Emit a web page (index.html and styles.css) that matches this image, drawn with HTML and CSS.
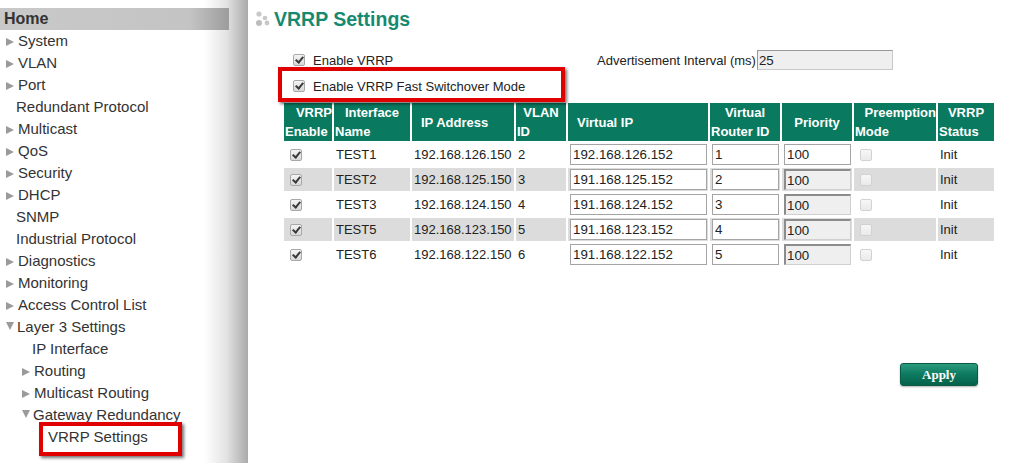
FILE: index.html
```html
<!DOCTYPE html>
<html lang="en">

<head>
    <meta name="viewport" content="width=device-width, initial-scale=1.0">
    <link rel="stylesheet" href="styles.css">
</head>

<body>
    <div class="page">
        <div class="sidebar">
            <div class="home">Home</div>
            <div class="nav-item"><span class="arrow"></span>System</div>
            <div class="nav-item"><span class="arrow"></span>VLAN</div>
            <div class="nav-item"><span class="arrow"></span>Port</div>
            <div class="nav-item plain">Redundant Protocol</div>
            <div class="nav-item"><span class="arrow"></span>Multicast</div>
            <div class="nav-item"><span class="arrow"></span>QoS</div>
            <div class="nav-item"><span class="arrow"></span>Security</div>
            <div class="nav-item"><span class="arrow"></span>DHCP</div>
            <div class="nav-item plain">SNMP</div>
            <div class="nav-item plain">Industrial Protocol</div>
            <div class="nav-item"><span class="arrow"></span>Diagnostics</div>
            <div class="nav-item"><span class="arrow"></span>Monitoring</div>
            <div class="nav-item"><span class="arrow"></span>Access Control List</div>
            <div class="nav-item"><span class="arrow open"></span>Layer 3 Settings</div>
            <div class="nav-item sub plain">IP Interface</div>
            <div class="nav-item sub"><span class="arrow"></span>Routing</div>
            <div class="nav-item sub"><span class="arrow"></span>Multicast Routing</div>
            <div class="nav-item sub"><span class="arrow open"></span>Gateway Redundancy</div>
            <div class="nav-item subsub plain">VRRP Settings<span class="highlight nav-mark"></span></div>
        </div>

        <div class="main">
            <h1 class="title">
                <svg class="dots" width="16" height="18" viewBox="0 0 16 18">
                    <circle cx="3" cy="4" r="2.6" fill="#c8c8c8" />
                    <circle cx="9" cy="8" r="2.3" fill="#c8c8c8" />
                    <circle cx="3" cy="13" r="3" fill="#bdbdbd" />
                    <circle cx="11" cy="13" r="2.4" fill="#c8c8c8" />
                </svg>
                VRRP Settings
            </h1>

            <div class="options">
                <div class="option-row">
                    <label class="check-label"><input type="checkbox" class="box" checked> Enable VRRP</label>
                    <label class="interval">Advertisement Interval (ms)<input type="text" class="interval-input" value="25"></label>
                </div>
                <div class="option-row">
                    <label class="check-label"><input type="checkbox" class="box" checked> Enable VRRP Fast Switchover Mode</label>
                    <span class="highlight option-mark"></span>
                </div>
            </div>

            <table class="vrrp-table">
                <thead>
                    <tr>
                        <th class="c-enable"><span class="l1 right">VRRP</span><span class="l2">Enable</span></th>
                        <th class="c-name"><span class="l1">Interface</span><span class="l2">Name</span></th>
                        <th class="c-ip single">IP Address</th>
                        <th class="c-vlan"><span class="l1">VLAN</span><span class="l2">ID</span></th>
                        <th class="c-vip single">Virtual IP</th>
                        <th class="c-vrid"><span class="l1">Virtual</span><span class="l2">Router ID</span></th>
                        <th class="c-prio single center">Priority</th>
                        <th class="c-pre"><span class="l1 right">Preemption</span><span class="l2">Mode</span></th>
                        <th class="c-status"><span class="l1">VRRP</span><span class="l2">Status</span></th>
                    </tr>
                </thead>
                <tbody>
                    <tr>
                        <td><input type="checkbox" class="box" checked></td>
                        <td>TEST1</td>
                        <td>192.168.126.150</td>
                        <td>2</td>
                        <td class="field"><input type="text" class="cell-input vip" value="192.168.126.152"></td>
                        <td class="field"><input type="text" class="cell-input vrid" value="1"></td>
                        <td class="field"><input type="text" class="cell-input prio" value="100"></td>
                        <td><input type="checkbox" class="box" disabled></td>
                        <td>Init</td>
                    </tr>
                    <tr>
                        <td><input type="checkbox" class="box" checked></td>
                        <td>TEST2</td>
                        <td>192.168.125.150</td>
                        <td>3</td>
                        <td class="field"><input type="text" class="cell-input vip" value="191.168.125.152"></td>
                        <td class="field"><input type="text" class="cell-input vrid" value="2"></td>
                        <td class="field"><input type="text" class="cell-input prio locked" value="100" readonly></td>
                        <td><input type="checkbox" class="box" disabled></td>
                        <td>Init</td>
                    </tr>
                    <tr>
                        <td><input type="checkbox" class="box" checked></td>
                        <td>TEST3</td>
                        <td>192.168.124.150</td>
                        <td>4</td>
                        <td class="field"><input type="text" class="cell-input vip" value="191.168.124.152"></td>
                        <td class="field"><input type="text" class="cell-input vrid" value="3"></td>
                        <td class="field"><input type="text" class="cell-input prio locked" value="100" readonly></td>
                        <td><input type="checkbox" class="box" disabled></td>
                        <td>Init</td>
                    </tr>
                    <tr>
                        <td><input type="checkbox" class="box" checked></td>
                        <td>TEST5</td>
                        <td>192.168.123.150</td>
                        <td>5</td>
                        <td class="field"><input type="text" class="cell-input vip" value="191.168.123.152"></td>
                        <td class="field"><input type="text" class="cell-input vrid" value="4"></td>
                        <td class="field"><input type="text" class="cell-input prio locked" value="100" readonly></td>
                        <td><input type="checkbox" class="box" disabled></td>
                        <td>Init</td>
                    </tr>
                    <tr>
                        <td><input type="checkbox" class="box" checked></td>
                        <td>TEST6</td>
                        <td>192.168.122.150</td>
                        <td>6</td>
                        <td class="field"><input type="text" class="cell-input vip" value="191.168.122.152"></td>
                        <td class="field"><input type="text" class="cell-input vrid" value="5"></td>
                        <td class="field"><input type="text" class="cell-input prio locked" value="100" readonly></td>
                        <td><input type="checkbox" class="box" disabled></td>
                        <td>Init</td>
                    </tr>
                </tbody>
            </table>

            <div class="actions">
                <button class="apply">Apply</button>
            </div>
        </div>
    </div>
</body>

</html>
```

FILE: styles.css
```css
body {
    margin: 0;
    font-family: "Liberation Sans", Arial, sans-serif;
    color: #222;
    background: #fff;
}

.page {
    display: flex;
    height: 463px;
}

/* left menu */
.sidebar {
    width: 248px;
    flex-shrink: 0;
    padding-top: 8px;
    box-sizing: border-box;
    background: linear-gradient(to right, #fff 0, #fff 204px, #e4e4e4 226px, #aaa 248px);
}

.home {
    width: 229px;
    height: 22px;
    line-height: 22px;
    padding-left: 4px;
    box-sizing: border-box;
    font-size: 16px;
    font-weight: bold;
    color: #333;
    background: linear-gradient(to right, #c9c9c9 0, #c4c4c4 190px, #9c9c9c 229px);
}

.nav-item {
    position: relative;
    height: 22px;
    line-height: 22px;
    font-size: 15px;
    color: #333;
    padding-left: 6px;
    white-space: nowrap;
}

.nav-item.plain {
    padding-left: 16px;
}

.nav-item.sub {
    padding-left: 22px;
}

.nav-item.sub.plain {
    padding-left: 32px;
}

.nav-item.subsub.plain {
    padding-left: 48px;
}

.arrow {
    display: inline-block;
    width: 0;
    height: 0;
    border-left: 8px solid #9a9a9a;
    border-top: 4.5px solid transparent;
    border-bottom: 4.5px solid transparent;
    margin-right: 4px;
    vertical-align: 0;
}

.arrow.open {
    border-left: 4.5px solid transparent;
    border-right: 4.5px solid transparent;
    border-top: 8px solid #9a9a9a;
    border-bottom: 0;
    margin-right: 3px;
    vertical-align: 2px;
}

/* red annotation frames */
.highlight {
    position: absolute;
    border: 4px solid #e00000;
    box-sizing: border-box;
    box-shadow: 2px 2px 3px rgba(0, 0, 0, 0.55);
}

.nav-mark {
    left: 39px;
    top: -4px;
    width: 143px;
    height: 34px;
}

/* main content */
.main {
    flex: 1;
    padding-top: 8px;
}

.title {
    display: flex;
    align-items: center;
    gap: 2px;
    margin: 0 0 0 8px;
    height: 22px;
    font-size: 19.5px;
    font-weight: bold;
    color: #168a70;
}

.options {
    margin: 19px 0 0 45px;
    font-size: 13px;
}

.option-row {
    position: relative;
    display: flex;
    align-items: center;
    height: 22px;
    margin-bottom: 4px;
}

.check-label {
    display: flex;
    align-items: center;
    width: 304px;
    gap: 8px;
}

.interval {
    display: flex;
    align-items: center;
}

.interval-input {
    width: 136px;
    height: 20px;
    box-sizing: border-box;
    margin: 0 0 0 1px;
    padding: 0 1px;
    font: 13.3px "Liberation Sans", Arial, sans-serif;
    color: #222;
    background: #efefef;
    border: 1px solid #c8c8c8;
    border-top-color: #999;
    border-left-color: #999;
}

.option-mark {
    left: -15px;
    top: -8px;
    width: 287px;
    height: 35px;
}

/* checkboxes drawn like the old IE ones */
.box {
    appearance: none;
    -webkit-appearance: none;
    width: 12px;
    height: 12px;
    margin: 0;
    position: relative;
    border: 1px solid #a8a8a8;
    border-radius: 2px;
    background: linear-gradient(#f4f4f4, #d8d8d8);
    box-sizing: border-box;
    flex-shrink: 0;
}

.box:checked::after {
    content: "";
    position: absolute;
    left: 3px;
    top: 0px;
    width: 3px;
    height: 6px;
    border: solid #3a3a3a;
    border-width: 0 2px 2px 0;
    transform: rotate(40deg);
}

.box:disabled {
    border-color: #d2d2d2;
    background: linear-gradient(#f7f7f7, #eaeaea);
}

/* table */
.vrrp-table {
    margin: 2px 0 0 34px;
    border-collapse: separate;
    border-spacing: 2px;
    font-size: 13px;
    table-layout: fixed;
}

.vrrp-table th {
    background: #097a5f;
    color: #fff;
    font-weight: bold;
    height: 38px;
    padding: 0;
    vertical-align: middle;
    line-height: 19px;
    text-align: left;
    white-space: nowrap;
}

.vrrp-table th .l1 {
    display: block;
    text-align: center;
}

.vrrp-table th .l1.right {
    text-align: right;
}

.vrrp-table th .l2 {
    display: block;
    padding-left: 1px;
}

.vrrp-table th.single {
    padding-left: 9px;
}

.vrrp-table th.center {
    padding-left: 0;
    text-align: center;
}

.c-enable { width: 48px; }
.c-name { width: 76px; }
.c-ip { width: 93px; }
.c-vlan { width: 50px; }
.c-vip { width: 131px; }
.c-vrid { width: 70px; }
.c-prio { width: 70px; }
.c-pre { width: 82px; }
.c-status { width: 56px; }

.vrrp-table td {
    height: 23px;
    padding: 0 0 0 2px;
    white-space: nowrap;
    color: #222;
    overflow: hidden;
}

.vrrp-table tbody tr:nth-child(even) td {
    background: #dcdcdc;
}

.vrrp-table td:first-child {
    padding-left: 6px;
}

.vrrp-table td:nth-child(8) {
    padding-left: 6px;
}

.vrrp-table td .box {
    display: block;
}

.cell-input {
    display: block;
    height: 21px;
    box-sizing: border-box;
    margin: 0;
    padding: 0 2px;
    font: 13.3px "Liberation Sans", Arial, sans-serif;
    color: #222;
    background: #fff;
    border: 1px solid #a4a4a4;
}

.cell-input.vip {
    width: 137px;
}

.cell-input.vrid {
    width: 67px;
}

.cell-input.prio {
    width: 67px;
}

.cell-input.locked {
    background: #efefef;
    border-color: #d0d0d0;
    border-top: 2px solid #8c8c8c;
    border-left: 2px solid #8c8c8c;
    padding-left: 1px;
}

.actions {
    display: flex;
    justify-content: flex-end;
    padding-right: 45px;
    margin-top: 95px;
}

.apply {
    width: 78px;
    height: 23px;
    padding: 0;
    font: bold 13px "Liberation Serif", "Times New Roman", serif;
    color: #fff;
    border: 1px solid #0a5a46;
    border-radius: 3px;
    background: linear-gradient(#2a9a7e, #0d7a5f 50%, #05614a);
    box-shadow: 0 1px 2px rgba(0, 0, 0, 0.3);
}
```
